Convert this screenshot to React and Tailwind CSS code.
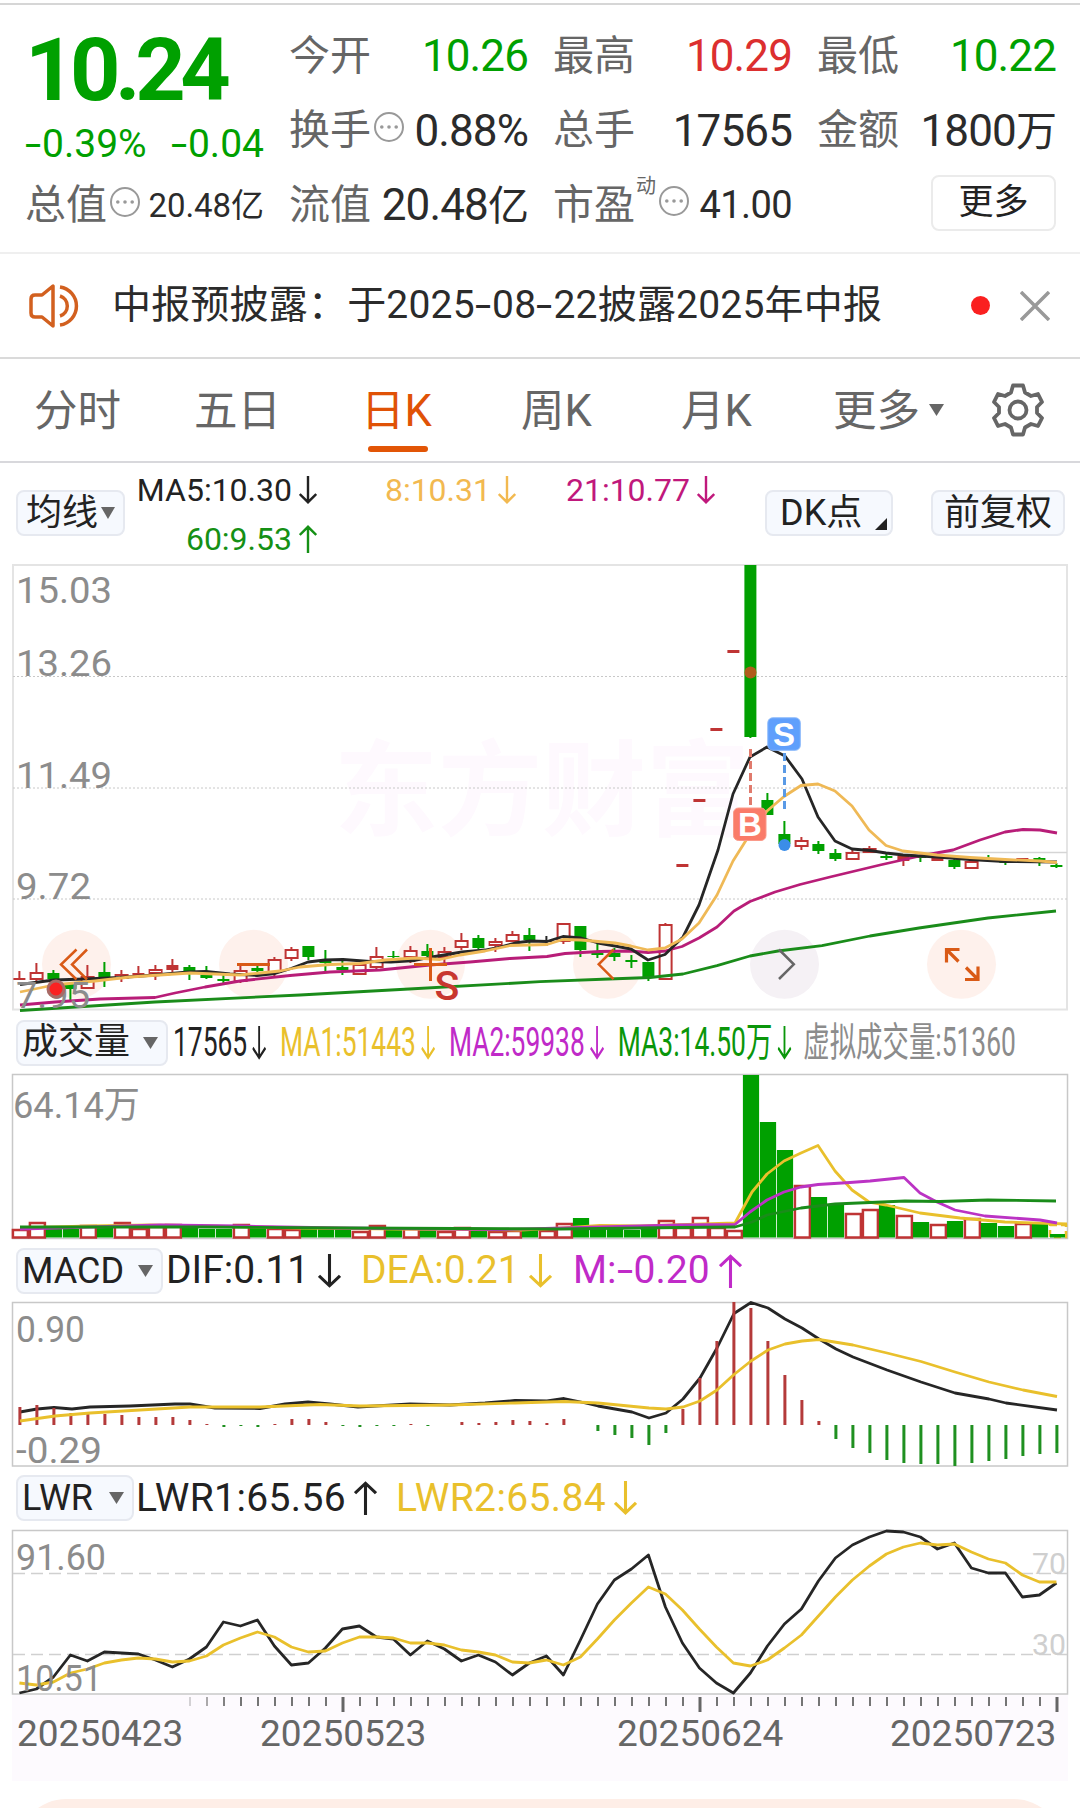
import clsx from "clsx";

const RED = "#bf3434";
const GREEN = "#00a000";
const DARK = "#262626";
const YELLOW = "#e9c02c";
const ORANGE = "#d95a16";

const barX = (i) => 19.4 + i * 17;

// [high, top, bottom, low, color], r = hollow red, R = filled red, g = green, k = black
const candles = [
    [971, 978, 980, 980, "R"], [963, 972, 979, 982, "r"], [970, 973, 979, 979, "g"], [984, 984, 989, 1000, "g"],
    [965, 976, 988, 988, "r"], [962, 972, 977, 987, "g"], [970, 974, 978, 982, "r"], [966, 973, 975, 978, "R"],
    [965, 969, 973, 980, "r"], [959, 965, 970, 972, "R"], [965, 967, 972, 980, "g"], [966, 975, 978, 979, "g"],
    [975, 979, 981, 983, "g"], [965, 970, 981, 983, "r"], [965, 968, 971, 974, "g"], [957, 959, 972, 976, "r"],
    [947, 949, 958, 961, "r"], [946, 946, 957, 960, "g"], [950, 961, 963, 971, "g"], [958, 967, 970, 975, "g"],
    [963, 964, 974, 974, "r"], [947, 956, 967, 969, "r"], [951, 956, 957, 960, "g"], [946, 950, 957, 963, "r"],
    [944, 951, 956, 960, "g"], [947, 951, 957, 964, "r"], [933, 940, 947, 950, "r"], [935, 938, 948, 949, "g"],
    [938, 941, 945, 952, "r"], [931, 934, 941, 941, "r"], [928, 935, 940, 951, "g"], [936, 941, 942, 946, "k"],
    [923, 923, 941, 944, "r"], [926, 926, 950, 957, "g"], [940, 953, 955, 958, "g"], [948, 953, 957, 961, "g"],
    [955, 960, 962, 968, "g"], [962, 962, 978, 981, "g"], [923, 924, 979, 979, "r"], [864, 864, 867, 867, "R"],
    [799, 799, 802, 802, "R"], [728, 728, 731, 731, "R"], [650, 650, 653, 653, "R"], [565, 565, 737, 738, "g"],
    [793, 800, 815, 815, "g"], [821, 834, 844, 848, "g"], [837, 840, 846, 850, "r"], [841, 844, 851, 854, "g"],
    [849, 853, 859, 861, "g"], [850, 852, 859, 860, "r"], [846, 848, 852, 852, "r"], [852, 856, 858, 860, "g"],
    [856, 856, 861, 866, "R"], [855, 856, 858, 862, "g"], [857, 857, 861, 861, "R"], [859, 860, 867, 869, "g"],
    [860, 861, 868, 868, "r"], [855, 858, 860, 861, "g"], [860, 861, 863, 865, "g"], [858, 858, 863, 863, "R"],
    [857, 858, 863, 866, "g"], [863, 865, 867, 868, "g"],
];

const ma5 = "20,984.5 54,980 85,979 120,977.5 155,975 188,972 206,971.5 230,974 257,975.5 275,973.5 291,968.5 308,962 325,960 343,959.5 370,961.5 391,962 415,960.5 432,957 462,952 485,950 500,947 515,943 530,941 547,941.5 563,936.5 581,938 598,943 615,946 631,949 648,960 665,954.5 683,937 699,905 718,850 733,794 750,757 767,747 785,756 802,779 818,817 835,841 852,849 870,850.5 886,853 903,855 937,857 970,859.5 1005,861.5 1057,862";
const ma8 = "20,992 54,985 95,981 130,977 160,975 190,973 215,974 240,975 260,973 280,971 300,967 330,964.5 360,963.5 385,960 415,958 440,959.5 460,955 485,951 510,945.5 547,944.5 563,939.5 581,940 615,943 631,946 648,950 665,948 682,939 699,923 717,895 733,861 750,834 767,811 784,796.5 801,785.5 818,784 835,791 852,806 869,830 886,845.5 903,851 937,855 970,857.5 1005,859.5 1040,861 1057,862.5";
const ma21 = "20,1005 55,1002 100,999 155,997.5 175,993 205,987 240,981 290,975.5 330,972 380,970 430,965 470,962 510,958.5 547,956.5 565,953.5 600,951.5 630,951 648,952.5 665,951 682,946.5 699,938 717,927 734,911 750,901.5 775,892 800,884.5 830,877 880,865 920,856 953,850 980,840 1005,832 1023,829.5 1040,830 1057,833";
const ma60 = "20,1010.5 60,1008 155,1002 300,995 400,989.5 540,981.7 609,979 650,977.5 683,974 717,965.7 750,956 778,951 822,945.7 870,936 919,928 988,918 1056,911";

const volumes = "r1229 r1222 g1228 g1229 r1225 g1228 r1222 r1228 r1226 r1224 g1228 g1229 g1229 r1224 g1228 r1228 r1229 g1228 g1229 g1229 r1231 r1225 g1228 r1228 g1228 r1231 r1227 g1228 r1231 r1230 g1230 r1230 r1223 g1218 g1227 g1228 g1230 g1228 r1220 r1227 r1217 r1227 r1230 g1075 g1122 g1150 r1185 g1197 g1204 r1213 r1209 g1205 r1215 g1222 r1224 g1221 r1218 g1223 g1226 r1223 g1223".split(" ");
const volMa1 = "20,1228 90,1226 150,1225 206,1226 300,1228 400,1229 520,1230 563,1228 600,1225.5 640,1226 735,1223 752,1192 767,1174 784,1161 801,1153 818,1145.5 835,1171 852,1190 869,1202 886,1205 920,1213 960,1218 1005,1222 1067,1224";
const volMa2 = "20,1229 160,1225 240,1226 340,1228 500,1229.5 600,1227 680,1225 735,1224.5 750,1212 767,1200 784,1192 801,1187 818,1184.5 850,1182.5 870,1181 904,1177.5 920,1193 937,1202 955,1210 985,1216 1040,1220 1057,1223";
const volMa3 = "20,1227 200,1227 350,1228 560,1229 680,1227.5 735,1227 752,1222 767,1215 801,1208 835,1204 905,1201 940,1201.5 988,1200 1056,1201";

const macd = [18, 20, 17, 12, 13, 11, 10, 8, 8, 8, 5, 1, -2, -1, -2, 1, 6, 6, 3, -1, -2, -1, -1, 1, -1, 0, 3, 2, 3, 5, 4, 2, 6, 0, -6, -10, -13, -20, -8, 16, 47, 84, 123, 117, 84, 50, 25, 4, -14, -23, -28, -35, -38, -39, -39, -41, -38, -36, -34, -31, -29, -28];
const dif = "20,1412 37,1409 54,1407.5 72,1409 90,1407 130,1406 175,1404 190,1404 215,1408 260,1408.5 285,1404 308,1402 330,1404 358,1407 410,1404 450,1405 485,1403 515,1400.5 547,1401 564,1398.5 581,1402 598,1406 615,1409 632,1412 649,1418 666,1413 683,1399 700,1378 717,1348 734,1313.5 751,1302.5 768,1308 785,1319 802,1328 819,1339 836,1349 853,1357 887,1370 921,1382 955,1393 989,1399 1006,1403 1057,1410";
const dea = "20,1421 55,1416 90,1413 140,1410 190,1407 260,1407 320,1404.5 360,1406 450,1405 515,1403 564,1401.5 598,1403 649,1408 666,1409 683,1407 700,1401 717,1390 734,1374.5 751,1361 768,1350 785,1344 802,1341 819,1339.5 853,1345 887,1353 921,1361.5 955,1372 989,1382 1023,1390 1057,1396.5";

const lwr1 = [1693, 1689, 1677, 1655, 1661, 1652, 1653, 1654, 1660, 1667, 1659, 1647, 1622, 1626, 1620, 1646, 1665, 1663, 1648, 1629, 1626, 1637, 1639, 1655, 1641, 1649, 1661, 1655, 1662, 1675, 1663, 1656, 1675, 1640, 1604, 1580, 1569, 1555, 1607, 1643, 1668, 1683, 1693, 1673, 1646, 1624, 1609, 1581, 1558, 1545, 1537, 1531, 1532, 1537, 1549, 1543, 1568, 1573, 1573, 1597, 1595, 1583];
const lwr2 = [1683, 1685, 1682, 1673, 1669, 1663, 1660, 1658, 1659, 1662, 1661, 1656, 1645, 1638, 1632, 1637, 1647, 1652, 1651, 1643, 1637, 1637, 1638, 1643, 1643, 1645, 1650, 1652, 1655, 1662, 1663, 1660, 1665, 1657, 1639, 1620, 1603, 1587, 1594, 1610, 1629, 1647, 1663, 1666, 1660, 1648, 1635, 1616, 1597, 1580, 1566, 1554, 1547, 1543, 1545, 1544, 1552, 1559, 1563, 1575, 1582, 1582];

const toPoints = (list) => list.map((y, i) => `${barX(i)},${y}`).join(" ");

function Line({ points, color }) {
    return <polyline points={points} fill="none" stroke={color} strokeWidth="2.8" strokeLinejoin="round" />;
}

function Label({ x = 16, y, w, color = "#8c8c8c", size = 37, children }) {
    return <text x={x} y={y} fill={color} fontSize={size} textLength={w} lengthAdjust="spacingAndGlyphs">{children}</text>;
}

function Arrow({ up, className = "h-[28px] w-[18px]" }) {
    return <svg viewBox="0 0 18 28" preserveAspectRatio="none" className={clsx("shrink-0", className)} fill="none" stroke="currentColor" strokeWidth="2.4">
        <path d={up ? "M9 28V1.800M0.800 10l8.200-8.200 8.200 8.200" : "M9 0v26.2M0.800 18l8.200 8.200 8.200-8.200"} />
    </svg>
}

function Caret({ className = "w-[15px] h-[12px]" }) {
    return <svg viewBox="0 0 15 12" preserveAspectRatio="none" className={clsx("shrink-0 text-[#666]", className)}>
        <path d="M0 0h15L7.500 12z" fill="currentColor" />
    </svg>
}

function Chip({ className, children }) {
    return <div className={clsx("flex h-[46px] shrink-0 items-center rounded-lg border-2 border-[#e6e9f0] bg-[#f6f9fe] text-[36px] text-[#222]", className)}>
        {children}
    </div>
}

function Minus() {
    return <span className="mr-[0.16em] inline-block origin-left scale-x-[1.5]">-</span>
}

function Dots() {
    return <svg viewBox="0 0 32 32" className="h-8 w-8 shrink-0">
        <circle cx="16" cy="16" r="14" fill="none" stroke="#999" strokeWidth="2" />
        <circle cx="8.800" cy="16" r="1.800" fill="#999" />
        <circle cx="16" cy="16" r="1.800" fill="#999" />
        <circle cx="23.200" cy="16" r="1.800" fill="#999" />
    </svg>
}

function Quote({ label, value, color = "text-[#2b2b2b]", icon }) {
    return <div className="flex h-[74.5px] items-center justify-between">
        <div className="flex items-center">
            <span className="text-[41px] text-[#666]">{label}</span>
            {icon && <span className="-mt-2 ml-[2px]"><Dots /></span>}
        </div>
        <span className={clsx("text-[44px] tracking-[-0.02em]", color)}>{value}</span>
    </div>
}

function Header() {
    return <div className="grid h-[249px] grid-cols-[239px_239px_239px_239px] gap-x-[25px] border-b-2 border-[#efefef] pl-[25px] pt-[14px]">
        <div className="flex flex-col text-[#00a000]">
            <div className="flex h-[101px] items-center text-[88px] font-bold tracking-[-0.062em]">10.24</div>
            <div className="flex h-[48px] items-center justify-between text-[39px]">
                <span><Minus />0.39%</span>
                <span><Minus />0.04</span>
            </div>
            <div className="flex h-[75px] items-center text-[#2b2b2b]">
                <span className="text-[41px] text-[#666]">总值</span>
                <span className="-mt-2 ml-[2px]"><Dots /></span>
                <span className="ml-auto text-[33px] tracking-[-0.002em]">20.48亿</span>
            </div>
        </div>
        <div>
            <Quote label="今开" value="10.26" color="text-[#00a000]" />
            <Quote label="换手" value="0.88%" icon />
            <Quote label="流值" value={<>20.48<span className="text-[41px]">亿</span></>} />
        </div>
        <div>
            <Quote label="最高" value="10.29" color="text-[#dc2f2f]" />
            <Quote label="总手" value="17565" />
            <div className="flex h-[74.5px] items-center text-[#2b2b2b]">
                <span className="text-[41px] text-[#666]">市盈</span>
                <span className="-mt-[38px] ml-[1px] text-[20px] text-[#666]">动</span>
                <span className="-mt-2 ml-[2px]"><Dots /></span>
                <span className="ml-auto text-[38px] tracking-[-0.015em]">41.00</span>
            </div>
        </div>
        <div>
            <Quote label="最低" value="10.22" color="text-[#00a000]" />
            <Quote label="金额" value={<>1800<span className="text-[41px]">万</span></>} />
            <div className="flex h-[74.5px] items-center justify-end">
                <div className="-mt-1 flex h-[56px] w-[125px] items-center justify-center rounded-lg border-2 border-[#ebebeb] text-[35px] text-[#222]"><span className="-mt-[2px]">更多</span></div>
            </div>
        </div>
    </div>
}

function Notice() {
    return <div className="flex h-[105px] items-center border-b-2 border-[#dadada] pl-[28px] pr-[30px] text-[#2b2b2b]">
        <svg viewBox="0 0 54 46" className="h-[46px] w-[54px]" fill="none" stroke="#d2601f" strokeWidth="3.500">
            <path d="M25 3v40L14 34H7q-4 0-4-4V16q0-4 4-4h7z" strokeLinejoin="round" />
            <path d="M32 13a10.500 10.500 0 0 1 0 20M32 4a19.200 19.200 0 0 1 0 38" />
        </svg>
        <div className="ml-[30px] whitespace-nowrap text-[39px] tracking-[0.005em]">中报预披露：于2025<Minus />08<Minus />22披露2025年中报</div>
        <div className="ml-auto h-[19px] w-[19px] rounded-full bg-[#fa2020]" />
        <svg viewBox="0 0 30 30" className="ml-[30px] h-[30px] w-[30px]" stroke="#999" strokeWidth="3.500">
            <path d="M1 1l28 28M29 1L1 29" />
        </svg>
    </div>
}

function Tabs() {
    return <div className="flex h-[104px] items-center border-b-2 border-[#d8d8dc] pl-[34px] pt-[3px] text-[43.5px] text-[#666]">
        <div className="w-[160px]">分时</div>
        <div className="w-[167px]">五日</div>
        <div className="relative w-[160px] text-[#e05206]">日K
            <div className="absolute -bottom-[19px] left-[7px] h-[6px] w-[60px] rounded-full bg-[#e25506]" />
        </div>
        <div className="w-[160px]">周K</div>
        <div className="w-[152px]">月K</div>
        <div className="flex items-center gap-[9px]">更多<Caret className="-mt-1 h-[12px] w-[15px]" /></div>
        <svg viewBox="0 0 52 54" className="-mt-[3px] ml-[48px] h-[54px] w-[52px]" fill="none" stroke="#666" strokeWidth="3.800">
            <path d="M21 2.500h10l2 7 6 3.500 7-2 4 8-5 5v6l5 5-4 8-7-2-6 3.500-2 7H21l-2-7-6-3.500-7 2-4-8 5-5v-6l-5-5 4-8 7 2 6-3.500z" strokeLinejoin="round" />
            <circle cx="26" cy="27" r="8.500" />
        </svg>
    </div>
}

function MaRow() {
    return <div className="flex h-[100px] items-center pl-[16px] text-[32px]">
        <Chip className="w-[109px] pl-2"><span className="-mt-px">均线</span><Caret className="ml-[3px] h-[12px] w-[14px]" /></Chip>
        <div className="grid h-[97px] grid-cols-[192px_199px_199px] grid-rows-2 self-end">
            <div className="flex items-center justify-end gap-[7px] text-[#222]">MA5:10.30<Arrow /></div>
            <div className="flex items-center justify-end gap-[7px] text-[#f2b950]">8:10.31<Arrow /></div>
            <div className="flex items-center justify-end gap-[7px] text-[#c0187c]">21:10.77<Arrow /></div>
            <div className="flex items-center justify-end gap-[7px] text-[#159015]">60:9.53<Arrow up /></div>
        </div>
        <Chip className="ml-[50px] w-[128px] pl-[13px]">
            <span className="-mt-px">DK点</span>
            <svg viewBox="0 0 11 11" className="mb-1 ml-auto mr-[4px] h-[12px] w-[12px] self-end"><path d="M11 0v11H0z" fill="#222" /></svg>
        </Chip>
        <Chip className="ml-[38px] w-[134px] justify-center"><span className="-mt-px">前复权</span></Chip>
    </div>
}

function Candle({ data, i }) {
    const [high, top, bottom, low, type] = data;
    const x = barX(i);
    const color = type === "g" ? GREEN : type === "k" ? DARK : RED;
    return <g stroke={color} strokeWidth="2">
        <path d={`M${x} ${high}V${top}M${x} ${bottom}V${low}`} />
        {type === "r"
            ? <rect x={x - 5.8} y={top + 1} width="12" height={bottom - top - 1} fill="#fff" />
            : <rect x={x - 6} y={top} width="12" height={bottom - top} fill={color} stroke="none" />}
    </g>
}

function PriceChart() {
    return <svg viewBox="0 563 1080 449" className="block h-[449px] w-full">
        <text x="334" y="828" fontSize="104" fontWeight="700" fill="#fef9fe">东方财富</text>
        <rect x="13" y="565" width="1054" height="444.500" fill="none" stroke="#e4e4e4" strokeWidth="2" />
        {[676.5, 788, 899].map(y => <path key={y} d={`M13 ${y}H1067`} stroke="#c8c8c8" strokeDasharray="2 2" />)}
        <path d="M845 852.500H1067" stroke="#d5d5d5" strokeWidth="1.500" />
        {[76.5, 253.5, 430.5, 607.5, 961.5].map(x => <circle key={x} cx={x} cy="964.300" r="34.500" fill="#fef1ec" />)}
        <circle cx="784.500" cy="964.300" r="34.500" fill="#f5f1f5" />
        {candles.map((c, i) => <Candle key={i} data={c} i={i} />)}
        <Line points={ma60} color="#1a8c1a" />
        <Line points={ma21} color="#b81d78" />
        <Line points={ma5} color={DARK} />
        <Line points={ma8} color="#efb956" />
        <Label y="603" w="96">15.03</Label>
        <Label y="676" w="96">13.26</Label>
        <Label y="788" w="96">11.49</Label>
        <Label y="899" w="75">9.72</Label>
        <Label y="1008" w="74">7.95</Label>
        <circle cx="56" cy="989" r="8" fill="#fa2222" stroke="#a86a66" strokeWidth="3" />
        <g fill="none" stroke={ORANGE} strokeWidth="2.500">
            <path d="M76.500 949.500L61 964.500l15.500 15M87 949.500L72 964.500l15 15" />
            <path d="M237 964.500h33M414 964.500h33M430.500 948v33" strokeWidth="3" />
            <path d="M613.500 949.500l-14.800 14.800 14.800 14.800" />
            <path d="M779 949.500l14.800 14.800L779 979" stroke="#666" />
            <path d="M946.500 962.500V949.500h13M947 950l11.500 11.500M978 966.500V979.500h-13M977.500 979L966 967.500" strokeWidth="3.200" />
        </g>
        <text x="434.500" y="1000" fontSize="41" fontWeight="500" fill="#c8372f">S</text>
        <circle cx="750.500" cy="672.500" r="6" fill="#b05c1c" />
        <circle cx="784.500" cy="845" r="6" fill="#3b8de8" />
        <path d="M750.500 749v58" stroke="#e07a6c" strokeWidth="3" strokeDasharray="8 4" />
        <path d="M784.500 753v56" stroke="#5a9ae6" strokeWidth="3" strokeDasharray="8 4" />
        <rect x="733.500" y="808" width="32.500" height="32.500" rx="5" fill="#fa7b69" stroke="#fa9a8a" />
        <rect x="767.800" y="717.800" width="32.500" height="32.500" rx="5" fill="#5f9ffc" stroke="#8bb9fb" />
        <g fill="#fff" fontSize="33" fontWeight="700" textAnchor="middle" fontFamily="Liberation Sans, sans-serif">
            <text x="750" y="836">B</text>
            <text x="784" y="746">S</text>
        </g>
    </svg>
}

function VolumeChart() {
    return <svg viewBox="0 1073 1080 167" className="block h-[167px] w-full">
        <rect x="12.500" y="1074.500" width="1055" height="164" fill="none" stroke="#c8c8c8" strokeWidth="1.500" />
        {volumes.map((v, i) => {
            const y = Number(v.slice(1));
            return v[0] === "r"
                ? <rect key={i} x={barX(i) - 6.5} y={y + 1} width="15" height={1236.5 - y} fill="#fff" stroke={RED} strokeWidth="2.500" />
                : <rect key={i} x={barX(i) - 7.5} y={y} width="16.200" height={1237.5 - y} fill={GREEN} />
        })}
        <rect x="1050" y="1225" width="16" height="12" fill="none" stroke={YELLOW} strokeWidth="2.500" strokeDasharray="7 4" />
        <rect x="1050" y="1234" width="15" height="3.500" fill={GREEN} />
        <Line points={volMa1} color={YELLOW} />
        <Line points={volMa2} color="#bb33c4" />
        <Line points={volMa3} color="#1a8c1a" />
        <Label x="13" y="1118" w="127">64.14万</Label>
    </svg>
}

function MacdChart() {
    return <svg viewBox="0 1301 1080 166" className="block h-[166px] w-full">
        <rect x="12.500" y="1302.500" width="1055" height="163.500" fill="none" stroke="#c8c8c8" strokeWidth="1.500" />
        <Line points={dif} color={DARK} />
        {macd.map((h, i) => <rect key={i} x={barX(i) - 1} y={h > 0 ? 1425 - h : 1425} width="3" height={Math.abs(h)} fill={h > 0 ? "#b43a3a" : "#1f9020"} />)}
        <Line points={dea} color={YELLOW} />
        <Label y="1342" w="69">0.90</Label>
        <Label y="1463" w="86">-0.29</Label>
    </svg>
}

function LwrChart() {
    return <svg viewBox="0 1529 1080 166" className="block h-[166px] w-full">
        <rect x="12.500" y="1530.500" width="1055" height="163.500" fill="none" stroke="#c8c8c8" strokeWidth="1.500" />
        <path d="M13 1573.500H1067M13 1654.500H1067" stroke="#d0d0d0" strokeWidth="1.500" strokeDasharray="12 6" />
        <Label x="1032" y="1574" w="34" size="30" color="#cfcfcf">70</Label>
        <Label x="1032" y="1655" w="34" size="30" color="#cfcfcf">30</Label>
        <Line points={toPoints(lwr1)} color={DARK} />
        <Line points={toPoints(lwr2)} color={YELLOW} />
        <Label y="1570" w="90">91.60</Label>
        <Label y="1691" w="86">10.51</Label>
    </svg>
}

function DateAxis() {
    const ticks = Array.from({ length: 52 }, (_, k) => k + 10);
    return <div className="mx-[12px] h-[86px] bg-[#fdfafe] text-[#666]">
        <svg viewBox="12 1695 1056 18" className="block h-[18px] w-full">
            {ticks.map(i => {
                const big = i === 19 || i === 40 || i === 61;
                return <path key={i} d={`M${barX(i) + 0.6} 1697v${big ? 15 : 9}`} stroke="#666" strokeWidth={big ? 3 : 1.8} opacity={Math.min(1, (i - 9) * 0.3)} />
            })}
        </svg>
        <div className="flex pl-[5px] pt-[1px] text-[37px] leading-[40px]">
            <div className="w-[243px]">20250423</div>
            <div className="w-[357px]">20250523</div>
            <div className="w-[273px]">20250624</div>
            <div>20250723</div>
        </div>
    </div>
}

export default function App() {
    return <div className="h-[1808px] w-[1080px] overflow-hidden bg-white pt-[3px] font-[Roboto,'Noto_Sans_CJK_SC',sans-serif] leading-none">
        <div className="border-t-2 border-[#d6d6d6]">
            <Header />
            <Notice />
            <Tabs />
        </div>
        <MaRow />
        <PriceChart />
        <div className="flex h-[61px] items-center pl-[16px]">
            <Chip className="w-[152px] pl-[4px]"><span className="-mt-px">成交量</span><Caret className="ml-[13px] h-[12px] w-[15px]" /></Chip>
            <div className="ml-[5px] flex w-[1300px] shrink-0 origin-left scale-x-[0.66] items-center text-[40px]">
                <div className="flex w-[162px] shrink-0 items-center gap-[8px] text-[#222]">17565<Arrow className="h-[34px] w-[21px]" /></div>
                <div className="flex w-[256px] shrink-0 items-center gap-[8px] text-[#e9c02c]">MA1:51443<Arrow className="h-[34px] w-[21px]" /></div>
                <div className="flex w-[256px] shrink-0 items-center gap-[8px] text-[#c02ac8]">MA2:59938<Arrow className="h-[34px] w-[21px]" /></div>
                <div className="flex w-[281px] shrink-0 items-center gap-[8px] text-[#0a960a]">MA3:14.50万<Arrow className="h-[34px] w-[21px]" /></div>
                <div className="shrink-0 text-[#8c8c8c]">虚拟成交量:51360</div>
            </div>
        </div>
        <VolumeChart />
        <div className="flex h-[61px] items-center pl-[16px] text-[39px]">
            <Chip className="w-[147px] pl-[4px]">MACD<Caret className="ml-auto mr-[8px] h-[12px] w-[15px]" /></Chip>
            <div className="ml-[3px] flex w-[195px] items-center gap-[9px] text-[#222]">DIF:0.11<Arrow className="h-[34px] w-[23px]" /></div>
            <div className="flex w-[212px] items-center gap-[9px] text-[#e9c02c]">DEA:0.21<Arrow className="h-[34px] w-[23px]" /></div>
            <div className="flex items-center gap-[9px] text-[#c02ac8]"><span>M:<Minus />0.20</span><Arrow up className="h-[34px] w-[23px]" /></div>
        </div>
        <MacdChart />
        <div className="flex h-[62px] items-center pl-[16px] text-[39px]">
            <Chip className="w-[118px] pl-[4px]">LWR<Caret className="ml-auto mr-[8px] h-[12px] w-[15px]" /></Chip>
            <div className="ml-[2px] flex w-[260px] items-center gap-[8px] tracking-[0.01em] text-[#222]">LWR1:65.56<Arrow up className="h-[34px] w-[23px]" /></div>
            <div className="flex items-center gap-[8px] tracking-[0.01em] text-[#e9c02c]">LWR2:65.84<Arrow className="h-[34px] w-[23px]" /></div>
        </div>
        <LwrChart />
        <DateAxis />
        <div className="mx-[18px] mt-[18px] h-[96px] rounded-full bg-[#feeee7]" />
    </div>
}
